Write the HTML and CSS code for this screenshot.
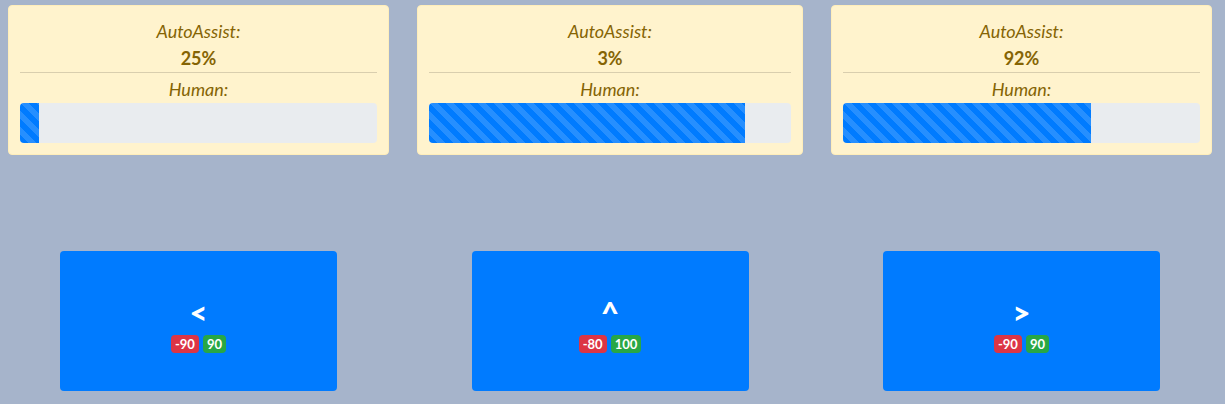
FILE: index.html
```html
<!DOCTYPE html>
<html>
<head>
<meta charset="utf-8">
<link rel="stylesheet" href="styles.css">
</head>
<body>
<div class="page">
  <div class="cards">
    <div class="card">
      <div class="label">AutoAssist:</div>
      <div class="value">25%</div>
      <hr class="sep">
      <div class="label">Human:</div>
      <div class="progress"><div class="bar" style="width:5.3%"></div></div>
    </div>
    <div class="card">
      <div class="label">AutoAssist:</div>
      <div class="value">3%</div>
      <hr class="sep">
      <div class="label">Human:</div>
      <div class="progress"><div class="bar" style="width:87.2%"></div></div>
    </div>
    <div class="card">
      <div class="label">AutoAssist:</div>
      <div class="value">92%</div>
      <hr class="sep">
      <div class="label">Human:</div>
      <div class="progress"><div class="bar" style="width:69.5%"></div></div>
    </div>
  </div>
  <div class="controls">
    <button class="ctrl">
      <span class="glyph">&lt;</span>
      <span class="badges"><span class="badge red">-90</span><span class="badge green">90</span></span>
    </button>
    <button class="ctrl">
      <span class="glyph">^</span>
      <span class="badges"><span class="badge red">-80</span><span class="badge green">100</span></span>
    </button>
    <button class="ctrl">
      <span class="glyph">&gt;</span>
      <span class="badges"><span class="badge red">-90</span><span class="badge green">90</span></span>
    </button>
  </div>
</div>
</body>
</html>
```

FILE: styles.css
```css
html, body {
  margin: 0;
  padding: 0;
}
body {
  background: #a6b4cb;
  font-family: Lato, "Liberation Sans", sans-serif;
  width: 1225px;
  height: 404px;
  overflow: hidden;
}
.page {
  padding: 5px 13px 0 8px;
}
.cards, .controls {
  display: grid;
  grid-template-columns: 381px 386px 381px;
  column-gap: 28px;
}
.card {
  background: #fff3cd;
  border: 1px solid #ffeeba;
  border-radius: 4px;
  padding: 12px 11px 11px;
  color: #856404;
  text-align: center;
}
.label {
  font-style: italic;
  font-size: 18px;
  line-height: 27px;
}
.value {
  font-weight: 700;
  font-size: 18px;
  line-height: 27px;
}
.sep {
  border: 0;
  border-top: 1px solid rgba(0, 0, 0, 0.15);
  margin: 0 0 3px;
}
.progress {
  height: 40px;
  background: #e9ecef;
  border-radius: 4px;
  overflow: hidden;
  display: flex;
}
.bar {
  height: 100%;
  background-color: #007bff;
  background-image: linear-gradient(45deg, rgba(255,255,255,.15) 25%, transparent 25%, transparent 50%, rgba(255,255,255,.15) 50%, rgba(255,255,255,.15) 75%, transparent 75%, transparent);
  background-size: 16px 16px;
}
.controls {
  margin-top: 96px;
}
.ctrl {
  justify-self: center;
  width: 277px;
  height: 140px;
  background: #007bff;
  border: 0;
  border-radius: 4px;
  color: #fff;
  font-family: Lato, "Liberation Sans", sans-serif;
  display: flex;
  flex-direction: column;
  align-items: center;
  justify-content: center;
  padding: 0;
}
.glyph {
  font-size: 31px;
  font-weight: 900;
  line-height: 45px;
}
.badges {
  display: flex;
  gap: 4px;
}
.badge {
  font-size: 13px;
  font-weight: 700;
  line-height: 12px;
  padding: 3px 4px;
  border-radius: 4px;
  color: #fff;
}
.red { background: #dc3545; }
.green { background: #28a745; }
```
